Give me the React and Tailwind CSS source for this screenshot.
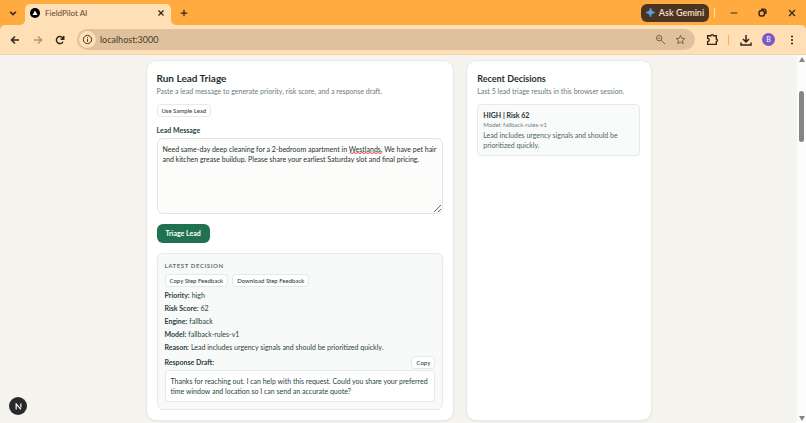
import React, { useState } from "react";

function Icon({ size = 12, width = 2, className = "", children }) {
  return (
    <svg width={size} height={size} viewBox="0 0 24 24" fill="none" stroke="currentColor" strokeWidth={width} className={className} aria-hidden="true">
      {children}
    </svg>
  );
}

function TitleBar() {
  return (
    <header className="flex h-[25px] shrink-0 items-stretch bg-[#ffab40] text-[#33261a]">
      <button aria-label="Search tabs" className="flex w-[25px] items-center justify-center">
        <Icon size={10} width={4}><path d="M5 9l7 7 7-7" /></Icon>
      </button>
      <div className="relative mt-1 flex w-[146px] items-center rounded-t-[5px] bg-[#ffdfb5] px-[5px] pb-1">
        <svg className="absolute bottom-0 -left-[5px]" width="5" height="5" aria-hidden="true"><path d="M5 0v5H0A5 5 0 0 0 5 0Z" fill="#ffdfb5" /></svg>
        <svg className="absolute -right-[5px] bottom-0" width="5" height="5" aria-hidden="true"><path d="M0 0v5H5A5 5 0 0 1 0 0Z" fill="#ffdfb5" /></svg>
        <svg width="10" height="10" viewBox="0 0 20 20" aria-hidden="true"><circle cx="10" cy="10" r="10" fill="#000" /><path d="M10 5l5 9H5Z" fill="#fff" /></svg>
        <span className="ml-[5px] flex-1 text-[8px] leading-[10px] text-[#5a4733]">FieldPilot AI</span>
        <button aria-label="Close tab"><Icon size={10} width={3}><path d="M6 6l12 12M18 6L6 18" /></Icon></button>
      </div>
      <button aria-label="New tab" className="flex w-[25px] items-center justify-center"><Icon size={10} width={3}><path d="M12 4v16M4 12h16" /></Icon></button>
      <div className="flex-1" />
      <button className="flex h-[18px] w-[68px] items-center justify-center gap-1 self-center rounded-[6px] bg-[#4b3522] text-[9px] font-semibold whitespace-nowrap text-[#f6e2cc]">
        <svg width="9" height="9" viewBox="0 0 24 24" aria-hidden="true">
          <defs>
            <linearGradient id="spark" x1="0" y1="0" x2="1" y2="1"><stop offset="0" stopColor="#e1705d" /><stop offset=".4" stopColor="#5aa4ea" /><stop offset="1" stopColor="#4a87ee" /></linearGradient>
          </defs>
          <path d="M12 0Q13 11 24 12Q13 13 12 24Q11 13 0 12Q11 11 12 0Z" fill="url(#spark)" stroke="url(#spark)" strokeWidth="2" />
        </svg>
        Ask Gemini
      </button>
      <div className="ml-[5px] h-[10px] w-px self-center bg-[#ffdfb5]" />
      <div className="ml-1 flex">
        <button aria-label="Minimize" className="flex w-[29px] items-center justify-center"><Icon size={8} width={3}><path d="M2 12h20" /></Icon></button>
        <button aria-label="Restore" className="flex w-[29px] items-center justify-center"><Icon size={9} width={4}><rect x="3" y="7" width="14" height="14" rx="5" /><path d="M8 3h8a5 5 0 0 1 5 5v8" /></Icon></button>
        <button aria-label="Close window" className="flex w-[29px] items-center justify-center"><Icon size={8} width={4}><path d="M3 3l18 18M21 3L3 21" /></Icon></button>
      </div>
    </header>
  );
}

function Toolbar() {
  return (
    <div className="shrink-0 bg-[#ffab40]">
      <nav className="flex h-[30px] items-center rounded-t-[5px] border-b border-[#f5d3aa] bg-[#ffdfb5] pr-[8px] pl-[9px] text-[#33261a]">
        <button aria-label="Back" className="mr-[11px]"><Icon size={12} width={3}><path d="M20 12H5M12 5l-7 7 7 7" /></Icon></button>
        <button aria-label="Forward" className="mr-[10px] text-[#b39774]"><Icon size={12} width={3}><path d="M4 12h15M12 5l7 7-7 7" /></Icon></button>
        <button aria-label="Reload" className="mr-[11px]"><Icon size={12} width={3}><path d="M18 15.500A7 7 0 1 1 17.500 8L19.500 10M19.500 4v6.500h-6.500" /></Icon></button>
        <div className="flex h-[21px] flex-1 items-center rounded-full bg-[#dfc29d] pr-[9px] pl-[2px]">
          <button aria-label="Site information" className="flex size-[17px] items-center justify-center rounded-full bg-[#ffdfb5]">
            <Icon size={11} width={2}><circle cx="12" cy="12" r="9" /><path d="M12 11v6M12 7v2" /></Icon>
          </button>
          <input aria-label="Address" defaultValue="localhost:3000" className="ml-1 min-w-0 flex-1 bg-transparent text-[9px] leading-3 text-[#4d3c2a] outline-none" />
          <button aria-label="Zoom" className="mr-[9px] text-[#6f5a43]"><Icon size={11} width={2}><circle cx="9" cy="9" r="6" /><path d="M6 9h6M13.500 13.500L22 22" /></Icon></button>
          <button aria-label="Bookmark" className="text-[#6f5a43]"><Icon size={11} width={2}><path d="M12 3l2.700 6.300 6.800.6-5.200 4.500 1.600 6.600L12 17.500 6.100 21l1.600-6.600L2.500 9.900l6.800-.6Z" /></Icon></button>
        </div>
        <button aria-label="Extensions" className="ml-[11px]"><Icon size={13} width={2.500}><path d="M3 5h6a2.500 2 0 0 1 5 0h5v6a2 2.500 0 0 1 0 5v5H3v-5a3 3 0 0 0 0-6Z" /></Icon></button>
        <div className="ml-[9px] h-[10px] w-px bg-[#ffab40]" />
        <button aria-label="Downloads" className="ml-[11px]"><Icon size={12} width={3}><path d="M12 2v13M6 10l6 6 6-6M2 17v5h20v-5" /></Icon></button>
        <button className="ml-[10px] flex size-[13px] items-center justify-center rounded-full bg-[#7e57c2] text-[7px] leading-none text-white">B</button>
        <button aria-label="Menu" className="ml-[11px]">
          <svg width="12" height="12" viewBox="0 0 24 24" fill="currentColor" aria-hidden="true"><circle cx="12" cy="5" r="2" /><circle cx="12" cy="12" r="2" /><circle cx="12" cy="19" r="2" /></svg>
        </button>
      </nav>
    </div>
  );
}

function SmallButton({ children }) {
  return (
    <button className="h-[13px] rounded-[4px] border border-[#e3eae7] bg-white px-1 text-[6px] leading-none font-medium whitespace-nowrap text-[#2f4548]">{children}</button>
  );
}

const facts = [
  ["Priority:", "high"],
  ["Risk Score:", "62"],
  ["Engine:", "fallback"],
  ["Model:", "fallback-rules-v1"],
  ["Reason:", "Lead includes urgency signals and should be prioritized quickly."],
];

function LatestDecision() {
  return (
    <section className="mt-[10px] rounded-[6px] border border-[#e4eae8] bg-[#f8faf9] p-[7px] text-[#2b3f43]">
      <h3 className="text-[6px] leading-[9px] font-bold tracking-widest text-[#61726f] uppercase">Latest Decision</h3>
      <div className="mt-1 flex gap-1">
        <SmallButton>Copy Step Feedback</SmallButton>
        <SmallButton>Download Step Feedback</SmallButton>
      </div>
      <dl className="mt-[2px] text-[7px] leading-[13px]">
        {facts.map(([name, value]) => (
          <div key={name} className="flex gap-[2px]"><dt className="font-bold">{name}</dt><dd>{value}</dd></div>
        ))}
      </dl>
      <div className="mt-[2px] flex items-center justify-between text-[7px] leading-[13px]">
        <h4 className="font-bold">Response Draft:</h4>
        <SmallButton>Copy</SmallButton>
      </div>
      <p className="mt-px rounded-[4px] border border-[#e4eae8] bg-white px-[5px] py-[5px] text-[7px] leading-[10px]">
        Thanks for reaching out. I can help with this request. Could you share your preferred<br />time window and location so I can send an accurate quote?
      </p>
    </section>
  );
}

export default function App() {
  const [message, setMessage] = useState("Need same-day deep cleaning for a 2-bedroom apartment in Westlands. We have pet hair\nand kitchen grease buildup. Please share your earliest Saturday slot and final pricing.");
  return (
    <div className="flex h-screen flex-col overflow-hidden bg-[#f5f4ef] font-['Lato','Open_Sans',sans-serif]">
      <TitleBar />
      <Toolbar />
      <div className="relative flex min-h-0 flex-1">
        <main className="flex-1 overflow-hidden px-4 pt-[5px]">
          <div className="mx-auto grid max-w-[506px] grid-cols-[5fr_3fr] gap-3">
            <section className="min-w-0 rounded-[10px] border border-[#e8e9e4] bg-white p-[10px] shadow-xs">
              <h1 className="mt-px text-[10px] leading-[13px] font-bold text-[#1f3034]">Run Lead Triage</h1>
              <p className="mt-px text-[7px] leading-[11px] text-[#6b7b7b]">Paste a lead message to generate priority, risk score, and a response draft.</p>
              <div className="mt-[7px] flex"><SmallButton>Use Sample Lead</SmallButton></div>
              <label htmlFor="message" className="mt-[8px] block text-[7px] leading-[10px] font-bold text-[#2b3f43]">Lead Message</label>
              <div className="relative mt-[3px]">
                <textarea id="message" spellCheck={false} value={message} onChange={(e) => setMessage(e.target.value)} className="block h-[76px] w-full resize rounded-[6px] border border-[#dfe6e3] bg-[#fcfdfb] px-[5px] py-[5px] text-[7px] leading-[10px] text-[#1f3034] outline-none" />
                <svg className="absolute top-[14px] left-[192px]" width="33" height="2" aria-hidden="true"><path d="M0 1.500l1-1 2 1 2-1 2 1 2-1 2 1 2-1 2 1 2-1 2 1 2-1 2 1 2-1 2 1 2-1 2 1 2-1" fill="none" stroke="#e04747" strokeWidth="1" /></svg>
              </div>
              <button className="mt-[10px] h-[19px] rounded-[6px] bg-[#20714f] px-[9px] text-[7px] leading-none font-bold text-white">Triage Lead</button>
              <LatestDecision />
            </section>
            <aside className="min-w-0 rounded-[10px] border border-[#e8e9e4] bg-white p-[10px] pr-[11px] shadow-xs">
              <h2 className="mt-px text-[9px] leading-[13px] font-bold text-[#1f3034]">Recent Decisions</h2>
              <p className="mt-px text-[7px] leading-[11px] text-[#6b7b7b]">Last 5 lead triage results in this browser session.</p>
              <article className="mt-[7px] rounded-[4px] border border-[#e4eae8] bg-[#f9fbfa] px-[5px] py-[5px]">
                <h3 className="text-[7px] leading-[10px] font-bold text-[#1f3034]">HIGH | Risk 62</h3>
                <p className="text-[6px] leading-[10px] text-[#6b7b7b]">Model: fallback-rules-v1</p>
                <p className="text-[7px] leading-[10px] text-[#50636a]">Lead includes urgency signals and should be<br />prioritized quickly.</p>
              </article>
            </aside>
          </div>
        </main>
        <div className="flex w-[9px] flex-col items-center bg-[#fcfcfc] py-[2px]" aria-hidden="true">
          <svg width="6" height="5"><path d="M3 0L6 5H0Z" fill="#858585" /></svg>
          <div className="mt-[29px] h-[51px] w-[5px] rounded-full bg-[#858585]" />
          <div className="flex-1" />
          <svg width="6" height="5"><path d="M0 0H6L3 5Z" fill="#858585" /></svg>
        </div>
        <button aria-label="Open developer tools" className="absolute bottom-[8px] left-[9px] flex size-[18px] items-center justify-center rounded-full bg-[#292929] text-white">
          <svg width="7" height="7" viewBox="0 0 24 24" fill="none" stroke="currentColor" strokeWidth="4" aria-hidden="true"><path d="M4 22V3l16 19M20 2v13" /></svg>
        </button>
      </div>
    </div>
  );
}
